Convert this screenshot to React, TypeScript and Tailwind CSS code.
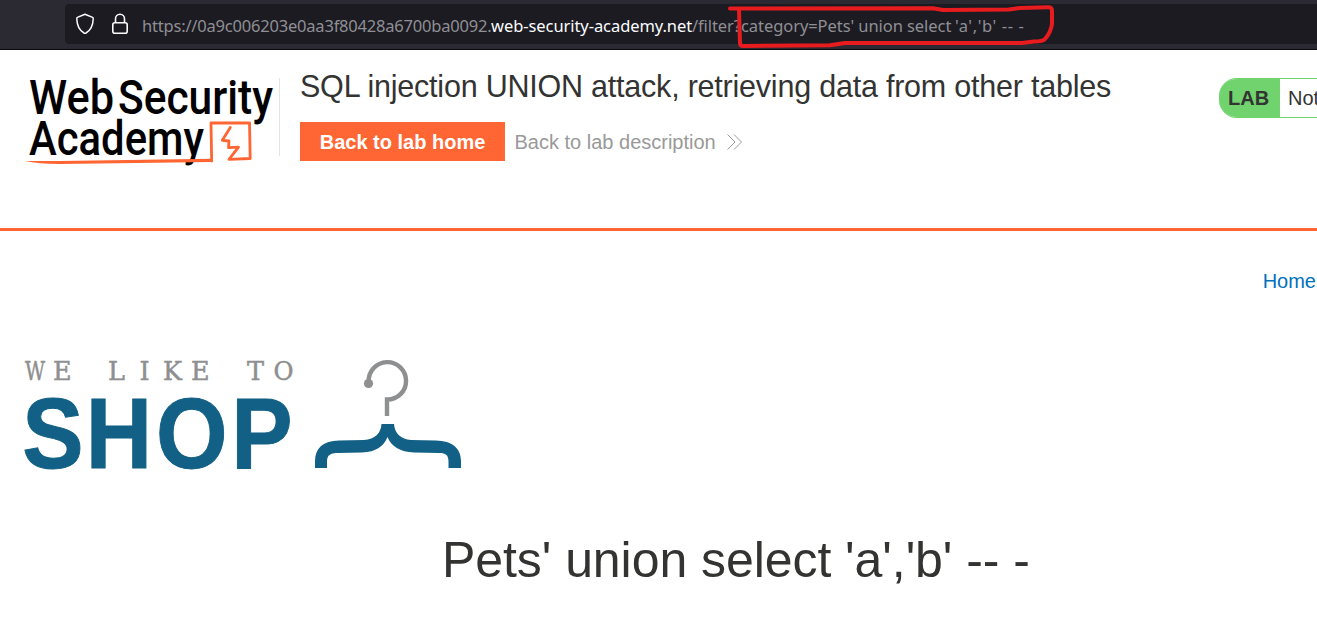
function ShieldIcon() {
  return (
    <svg width="20" height="22" viewBox="0 0 20 22" fill="none" stroke="#fbfbfe" strokeWidth="1.5" strokeLinejoin="round">
      <path d="M10 1.2 L17.6 4.400 Q18.3 4.700 18.2 5.800 C18 13 15.5 17.5 11 20 Q10 20.5 9 20 C4.500 17.5 2 13 1.800 5.800 Q1.700 4.700 2.400 4.400 Z" />
    </svg>
  );
}

function LockIcon() {
  return (
    <svg width="18" height="22" viewBox="0 0 18 22" fill="none" stroke="#fbfbfe" strokeWidth="1.6">
      <rect x="1.8" y="9.800" width="14.4" height="10.400" rx="2" />
      <path d="M4.500 9.800V5.800a4.500 4.500 0 0 1 9 0v4" />
    </svg>
  );
}

function AddressBar() {
  return (
    <div className="relative h-[50px] border-b border-[#0c0c0d] bg-[#2b2a33] pl-[65px] pt-1">
      <div className="flex h-10 items-center rounded-l bg-[#1c1b22] pl-[10px]">
        <ShieldIcon />
        <div className="ml-4 flex">
          <LockIcon />
        </div>
        <div className="ml-[13px] flex whitespace-pre pt-1 font-['Noto_Sans',sans-serif] text-[16.5px] leading-6 text-[#8f8f94]">
          <span className="w-[349px] tracking-[-0.2px]">https://0a9c006203e0aa3f80428a6700ba0092.</span>
          <span className="w-[201px] tracking-[-0.07px] text-[#fbfbfe]">web-security-academy.net</span>
          <span className="w-[49px] tracking-[-0.1px]">/filter?</span>
          <span className="w-[214px] tracking-[-0.07px]">category=Pets' union select </span>
          <span className="tracking-[0.6px]">'a','b' -- -</span>
        </div>
      </div>
      <svg className="absolute left-[720px] top-0" width="345" height="50" viewBox="720 0 345 50" fill="none" stroke="#e81c1f" strokeWidth="4" strokeLinecap="round" strokeLinejoin="round">
        <path d="M730 8.500 L933 8.200 L943 10 L1009 9.600 L1020 8 L1048 7.200 Q1052 7 1052 11 L1052 24 Q1051 32 1045 39 Q1043 41.500 1034 41.500 L1022 43 L845 43 L830 45.200 L743 46 Q740 46 740 43 L739 10" />
      </svg>
    </div>
  );
}

function AcademyLogo() {
  return (
    <svg className="shrink-0 overflow-visible" width="254" height="100" viewBox="24 70 254 100">
      <g fill="#000" fontFamily="Roboto, sans-serif" fontWeight="500" fontSize="48">
        <text x="29" y="114" textLength="85" lengthAdjust="spacingAndGlyphs">Web</text>
        <text x="118" y="114" textLength="155" lengthAdjust="spacingAndGlyphs">Security</text>
        <text x="29" y="154.500" textLength="175" lengthAdjust="spacingAndGlyphs">Academy</text>
      </g>
      <path d="M25 161 L60 161 L212 158.800 L212 162 L60 164 Q38 164 25 161Z" fill="#ff6633" />
      <path d="M211.700 161 L211 123 L249.500 122.800 L250.200 158.500 L229 159.400 L238.500 147.200 L228.500 147.600 L229 141 L222.300 140.300 L230.300 127.500" fill="none" stroke="#ff6633" strokeWidth="2.800" strokeLinejoin="round" strokeLinecap="round" />
    </svg>
  );
}

function LabHeader() {
  return (
    <header className="flex h-[181px] border-b-[3px] border-[#ff6633] pl-6 pt-5">
      <AcademyLogo />
      <div className="mt-2 ml-px h-[78px] w-px shrink-0 bg-[#e4e4e4]" />
      <div className="ml-5 w-[919px] shrink-0">
        <h1 className="-mt-px whitespace-nowrap text-[30.5px] leading-[34px] tracking-[-0.22px]">SQL injection UNION attack, retrieving data from other tables</h1>
        <div className="mt-[19px] flex items-center text-xl">
          <a className="flex h-[39px] w-[205px] items-center justify-center bg-[#ff6633] font-bold text-white">Back to lab home</a>
          <a className="ml-[9.5px] flex items-center text-[#999999]">
            Back to lab description
            <svg className="ml-[11px]" width="16" height="16" viewBox="0 0 16 16" fill="none" stroke="#999999">
              <path d="M.5 .5 8 8 .5 15.500M7 .5 14.500 8 7 15.500" />
            </svg>
          </a>
        </div>
      </div>
      <div className="mt-2 flex h-10 flex-1 overflow-hidden whitespace-nowrap rounded-l-[18px] border-y border-[#71d36e] text-xl leading-[38px]">
        <span className="-my-px h-10 w-[61px] shrink-0 bg-[#71d36e] pl-[9px] font-bold leading-10">LAB</span>
        <span className="pl-2">Not</span>
      </div>
    </header>
  );
}

function ShopLogo() {
  return (
    <svg className="overflow-visible" width="445" height="120" viewBox="20 355 445 120">
      <text y="380" fill="#8e8f90" stroke="#8e8f90" strokeWidth="0.5" fontFamily="'DejaVu Serif', serif" fontSize="25.500" xmlSpace="preserve">
        <tspan x="25" textLength="20" lengthAdjust="spacingAndGlyphs">W</tspan>
        <tspan x="53">E</tspan>
        <tspan x="108">L</tspan>
        <tspan x="139.500">I</tspan>
        <tspan x="163" textLength="19" lengthAdjust="spacingAndGlyphs">K</tspan>
        <tspan x="191">E</tspan>
        <tspan x="247">T</tspan>
        <tspan x="273.500" textLength="20" lengthAdjust="spacingAndGlyphs">O</tspan>
      </text>
      <text transform="scale(0.91 1)" x="24.400 94.300 171.500 254" y="468.500" fill="#126085" stroke="#126085" strokeWidth="1" fontFamily="'Liberation Sans', sans-serif" fontWeight="700" fontSize="101">SHOP</text>
      <g fill="none" stroke="#8e8f90" strokeWidth="4.400">
        <path d="M368.700 382 A18.700 18.700 0 1 1 387 399.500 V416" />
      </g>
      <circle cx="368.500" cy="383.500" r="4.600" fill="#8e8f90" />
      <path d="M381.500 424 H394 C394.500 433 401 439.500 411 440 L436 440.500 C452 441 461 448 461 461 V468 H448.500 V462 C448.500 455 446 453 439 453 L414 452.500 C400 452 391 446 387.500 437 C384 446 376 452 362 452.500 L338 453 C330 453 327 455 327 462 V468 H315 V461 C315 448 323 441 339 440.500 L364 440 C375 439.500 381 433 381.500 424Z" fill="#126085" />
    </svg>
  );
}

export default function App() {
  return (
    <div className="h-[622px] w-full overflow-hidden bg-white font-['Liberation_Sans',Arial,sans-serif] text-[#333332]">
      <AddressBar />
      <LabHeader />
      <main>
        <nav className="flex justify-end pr-px pt-[35px] text-xl leading-[30px] text-[#0071bc]">
          <a>Home</a>
        </nav>
        <div className="pl-5 pt-[59px]">
          <ShopLogo />
        </div>
        <h2 className="whitespace-nowrap pl-[442px] pt-[56px] text-[50px] leading-[58px] tracking-[-0.06px]">Pets' union select 'a','b' -- -</h2>
      </main>
    </div>
  );
}
